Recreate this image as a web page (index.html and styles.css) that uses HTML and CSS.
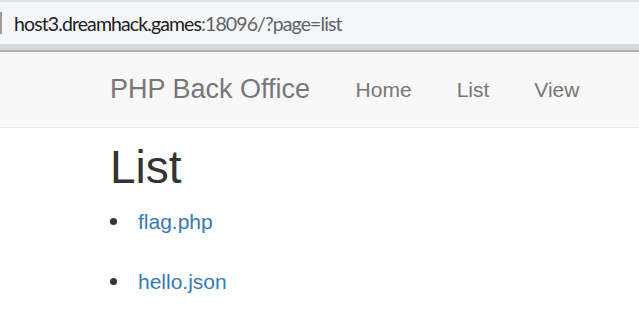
FILE: index.html
```html
<!DOCTYPE html>
<html lang="en">
<head>
  <meta charset="UTF-8" />
  <title>PHP Back Office</title>
  <link rel="stylesheet" href="styles.css">
</head>
<body>
  <div class="address-bar">
    <span class="caret"></span>
    <span class="url"><span class="host">host3.dreamhack.games</span>:18096/?page=list</span>
  </div>
  <div class="bar-shadow"></div>

  <nav class="navbar">
    <a class="brand" href="#">PHP Back Office</a>
    <ul class="nav">
      <li><a href="#">Home</a></li>
      <li><a href="#">List</a></li>
      <li><a href="#">View</a></li>
    </ul>
  </nav>

  <div class="container">
    <h1>List</h1>
    <ul class="files">
      <li><a href="#">flag.php</a></li>
      <li><a href="#">hello.json</a></li>
    </ul>
  </div>
</body>
</html>
```

FILE: styles.css
```css
body {
  margin: 0;
  font-family: 'Liberation Sans', Arial, sans-serif;
  color: #333;
  background: #fff;
  overflow: hidden;
}

a {
  text-decoration: none;
}

.address-bar {
  height: 42px;
  border-top: 2px solid #dfe1e5;
  background: #f5f6f7;
  display: flex;
  align-items: center;
  font-family: 'Lato', sans-serif;
  font-size: 19.5px;
  letter-spacing: -0.9px;
  color: #5f6368;
}

.caret {
  width: 2px;
  height: 22px;
  background: #9a9a9a;
  margin-right: 12px;
}

.url .host {
  color: #202124;
}

.bar-shadow {
  height: 6px;
  background: #d7d8dc;
  border-bottom: 2px solid #b1b2b6;
}

.navbar {
  height: 75px;
  background: #f8f8f8;
  border-bottom: 1px solid #e7e7e7;
  display: flex;
  align-items: center;
  padding-left: 87px;
}

.brand {
  font-size: 27px;
  color: #777;
  padding: 0 23px;
}

.nav {
  display: flex;
  list-style: none;
  margin: 0;
  padding: 0;
}

.nav a {
  display: block;
  font-size: 21px;
  color: #777;
  padding: 0 22.5px;
}

.container {
  padding-left: 110px;
}

h1 {
  font-size: 46px;
  font-weight: 500;
  margin: 14px 0 14px;
  line-height: 1.1;
}

.files {
  margin: 0;
  padding: 0;
  list-style: none;
  font-size: 21px;
}

.files li {
  display: flex;
  align-items: center;
  line-height: 30px;
  margin-bottom: 30px;
}

.files li::before {
  content: "";
  width: 7px;
  height: 7px;
  border-radius: 50%;
  background: #333;
  margin-right: 21px;
}

.files a {
  color: #337ab7;
}
```
